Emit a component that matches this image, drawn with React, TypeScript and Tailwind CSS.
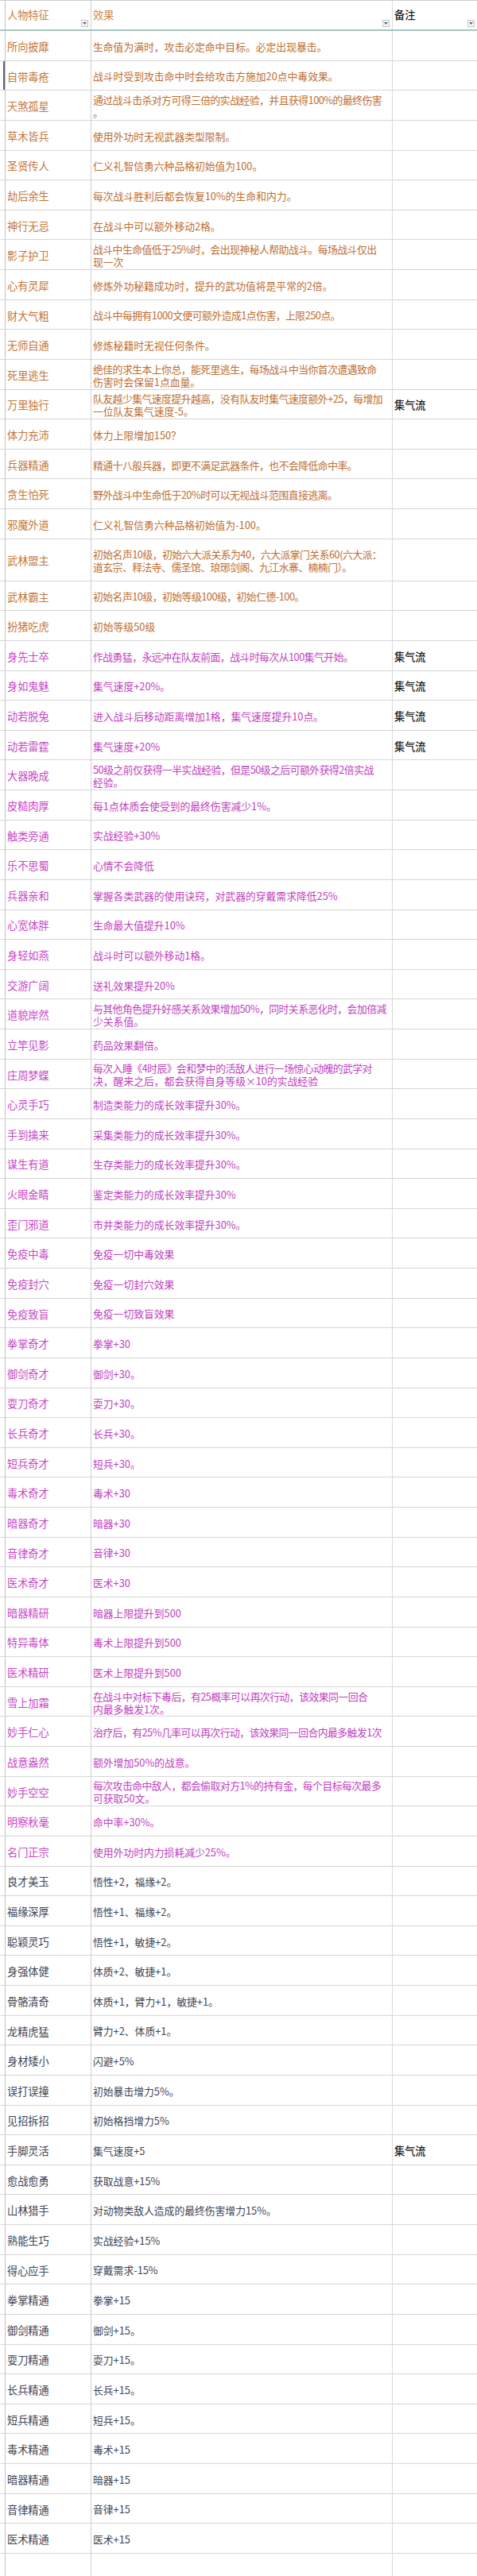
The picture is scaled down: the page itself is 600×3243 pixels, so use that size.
import React from "react";

// [name, effect (\n = line break), note]
type Row = [string, string, string?];

const ORANGE: Row[] = [
  ["所向披靡", "生命值为满时，攻击必定命中目标。必定出现暴击。"],
  ["自带毒疮", "战斗时受到攻击命中时会给攻击方施加20点中毒效果。"],
  ["天煞孤星", "通过战斗击杀对方可得三倍的实战经验，并且获得100%的最终伤害\n。"],
  ["草木皆兵", "使用外功时无视武器类型限制。"],
  ["圣贤传人", "仁义礼智信勇六种品格初始值为100。"],
  ["劫后余生", "每次战斗胜利后都会恢复10%的生命和内力。"],
  ["神行无忌", "在战斗中可以额外移动2格。"],
  ["影子护卫", "战斗中生命值低于25%时，会出现神秘人帮助战斗。每场战斗仅出\n现一次"],
  ["心有灵犀", "修炼外功秘籍成功时，提升的武功值将是平常的2倍。"],
  ["财大气粗", "战斗中每拥有1000文便可额外造成1点伤害，上限250点。"],
  ["无师自通", "修炼秘籍时无视任何条件。"],
  ["死里逃生", "绝佳的求生本上你总，能死里逃生，每场战斗中当你首次遭遇致命\n伤害时会保留1点血量。"],
  ["万里独行", "队友越少集气速度提升越高，没有队友时集气速度额外+25，每增加\n一位队友集气速度-5。", "集气流"],
  ["体力充沛", "体力上限增加150？"],
  ["兵器精通", "精通十八般兵器，即更不满足武器条件，也不会降低命中率。"],
  ["贪生怕死", "野外战斗中生命低于20%时可以无视战斗范围直接逃离。"],
  ["邪魔外道", "仁义礼智信勇六种品格初始值为-100。"],
  ["武林盟主", "初始名声10级，初始六大派关系为40，六大派掌门关系60(六大派：\n道玄宗、释法寺、儒圣馆、琅琊剑阁、九江水寨、楠楠门）。"],
  ["武林霸主", "初始名声10级，初始等级100级，初始仁德-100。"],
  ["扮猪吃虎", "初始等级50级"],
];

const MAGENTA: Row[] = [
  ["身先士卒", "作战勇猛，永远冲在队友前面，战斗时每次从100集气开始。", "集气流"],
  ["身如鬼魅", "集气速度+20%。", "集气流"],
  ["动若脱兔", "进入战斗后移动距离增加1格，集气速度提升10点。", "集气流"],
  ["动若雷霆", "集气速度+20%", "集气流"],
  ["大器晚成", "50级之前仅获得一半实战经验，但是50级之后可额外获得2倍实战\n经验。"],
  ["皮糙肉厚", "每1点体质会使受到的最终伤害减少1%。"],
  ["触类旁通", "实战经验+30%"],
  ["乐不思蜀", "心情不会降低"],
  ["兵器亲和", "掌握各类武器的使用诀窍，对武器的穿戴需求降低25%"],
  ["心宽体胖", "生命最大值提升10%"],
  ["身轻如燕", "战斗时可以额外移动1格。"],
  ["交游广阔", "送礼效果提升20%"],
  ["道貌岸然", "与其他角色提升好感关系效果增加50%，同时关系恶化时，会加倍减\n少关系值。"],
  ["立竿见影", "药品效果翻倍。"],
  ["庄周梦蝶", "每次入睡《4时辰》会和梦中的活敌人进行一场惊心动魄的武学对\n决，醒来之后，都会获得自身等级×10的实战经验"],
  ["心灵手巧", "制造类能力的成长效率提升30%。"],
  ["手到擒来", "采集类能力的成长效率提升30%。"],
  ["谋生有道", "生存类能力的成长效率提升30%。"],
  ["火眼金睛", "鉴定类能力的成长效率提升30%"],
  ["歪门邪道", "市井类能力的成长效率提升30%。"],
  ["免疫中毒", "免疫一切中毒效果"],
  ["免疫封穴", "免疫一切封穴效果"],
  ["免疫致盲", "免疫一切致盲效果"],
  ["拳掌奇才", "拳掌+30"],
  ["御剑奇才", "御剑+30。"],
  ["耍刀奇才", "耍刀+30。"],
  ["长兵奇才", "长兵+30。"],
  ["短兵奇才", "短兵+30。"],
  ["毒术奇才", "毒术+30"],
  ["暗器奇才", "暗器+30"],
  ["音律奇才", "音律+30"],
  ["医术奇才", "医术+30"],
  ["暗器精研", "暗器上限提升到500"],
  ["特异毒体", "毒术上限提升到500"],
  ["医术精研", "医术上限提升到500"],
  ["雪上加霜", "在战斗中对标下毒后，有25概率可以再次行动，该效果同一回合\n内最多触发1次。"],
  ["妙手仁心", "治疗后，有25%几率可以再次行动，该效果同一回合内最多触发1次"],
  ["战意盎然", "额外增加50%的战意。"],
  ["妙手空空", "每次攻击命中敌人，都会偷取对方1%的持有金，每个目标每次最多\n可获取50文。"],
  ["明察秋毫", "命中率+30%。"],
  ["名门正宗", "使用外功时内力损耗减少25%。"],
];

const DARK: Row[] = [
  ["良才美玉", "悟性+2，福缘+2。"],
  ["福缘深厚", "悟性+1、福缘+2。"],
  ["聪颖灵巧", "悟性+1，敏捷+2。"],
  ["身强体健", "体质+2、敏捷+1。"],
  ["骨骼清奇", "体质+1，臂力+1，敏捷+1。"],
  ["龙精虎猛", "臂力+2、体质+1。"],
  ["身材矮小", "闪避+5%"],
  ["误打误撞", "初始暴击增力5%。"],
  ["见招拆招", "初始格挡增力5%"],
  ["手脚灵活", "集气速度+5", "集气流"],
  ["愈战愈勇", "获取战意+15%"],
  ["山林猎手", "对动物类敌人造成的最终伤害增力15%。"],
  ["熟能生巧", "实战经验+15%"],
  ["得心应手", "穿戴需求-15%"],
  ["拳掌精通", "拳掌+15"],
  ["御剑精通", "御剑+15。"],
  ["耍刀精通", "耍刀+15。"],
  ["长兵精通", "长兵+15。"],
  ["短兵精通", "短兵+15。"],
  ["毒术精通", "毒术+15"],
  ["暗器精通", "暗器+15"],
  ["音律精通", "音律+15"],
  ["医术精通", "医术+15"],
];

const TONES = {
  orange: { name: "text-[#c4773c]", effect: "text-[#bd6e32]" },
  magenta: { name: "text-[#c848c8]", effect: "text-[#c042c0]" },
  dark: { name: "text-[#3e4657]", effect: "text-[#3e4555]" },
};

const GRID = "grid grid-cols-[6px_108px_379px_107px]";

function FilterButton() {
  return (
    <span className="absolute right-[3px] bottom-[3px] w-[9px] h-[9px] border border-[#c4c4c4] bg-[#f6f6f6] flex items-center justify-center">
      <svg width="5" height="3" viewBox="0 0 5 3">
        <path d="M0 0h5L2.5 3z" fill="#666" />
      </svg>
    </span>
  );
}

function TraitRow({
  row,
  tone,
  tall,
  marked,
}: {
  row: Row;
  tone: keyof typeof TONES;
  tall?: boolean;
  marked?: boolean;
}) {
  const [name, effect, note] = row;
  const t = TONES[tone];
  return (
    <div
      className={`${GRID} border-b border-[#d6d6d6] ${tall ? "h-[53px]" : "h-[37.63px]"}`}
    >
      <div className="flex justify-end">
        {marked && <span className="w-[2px] h-full bg-[#5a6878]" />}
      </div>
      <div className={`border-l border-[#c2c2c2] pl-[2px] pt-[3px] flex items-center whitespace-nowrap ${t.name}`}>
        {name}
      </div>
      <div className={`border-l border-[#cfcfcf] pl-[2px] pt-[3px] flex flex-col justify-center leading-[16px] whitespace-nowrap text-[12.8px] ${t.effect}`}>
        {effect.split("\n").map((line, i) => (
          <span key={i} className={line.length > 25 ? "tracking-[-0.5px]" : ""}>
            {line}
          </span>
        ))}
      </div>
      <div className="border-l border-[#dadada] pl-[2px] pt-[3px] flex items-center whitespace-nowrap text-[#1e1e1e] font-medium">
        {note}
      </div>
    </div>
  );
}

export default function App() {
  return (
    <div className="w-[600px] bg-white text-[13.2px] font-['Noto_Sans_CJK_SC','Noto_Sans',sans-serif]">
      {/* header */}
      <div className={`${GRID} h-[39px] border-t border-[#cfcfcf] border-b-2 border-b-[#a8c6bf]`}>
        <div />
        <div className="relative border-l border-[#c2c2c2] pl-[2px] flex items-center text-[#c4824a]">
          人物特征
          <FilterButton />
        </div>
        <div className="relative border-l border-[#cfcfcf] pl-[2px] flex items-center text-[#cf8848]">
          效果
          <FilterButton />
        </div>
        <div className="relative border-l border-[#dadada] pl-[2px] flex items-center text-[#1a1a1a] font-medium">
          备注
          <FilterButton />
        </div>
      </div>

      {ORANGE.map((r, i) => (
        <TraitRow key={r[0]} row={r} tone="orange" tall={r[0] === "武林盟主"} marked={i === 1} />
      ))}
      {MAGENTA.map((r) => (
        <TraitRow key={r[0]} row={r} tone="magenta" />
      ))}
      {DARK.map((r) => (
        <TraitRow key={r[0]} row={r} tone="dark" />
      ))}

      {/* trailing empty row */}
      <div className={`${GRID} h-[28px]`}>
        <div />
        <div className="border-l border-[#c2c2c2]" />
        <div className="border-l border-[#cfcfcf]" />
        <div className="border-l border-[#dadada]" />
      </div>
    </div>
  );
}
